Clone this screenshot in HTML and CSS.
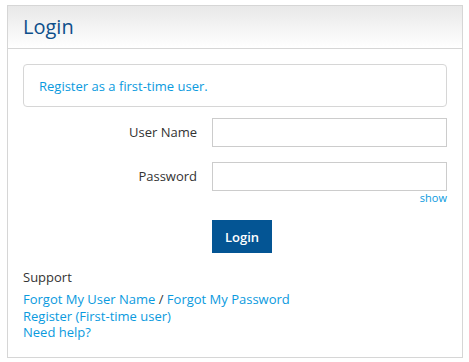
FILE: index.html
```html
<!DOCTYPE html>
<html lang="en">
<head>
    <meta charset="UTF-8">
    <meta name="viewport" content="width=device-width, initial-scale=1.0">
    <title>Login</title>
    <link rel="stylesheet" href="styles.css">
</head>
<body>
    <div class="panel">
        <div class="panel-header">
            <h1>Login</h1>
        </div>
        <div class="panel-body">
            <div class="notice">
                <a href="#">Register as a first-time user.</a>
            </div>

            <form class="login-form" onsubmit="return false;">
                <div class="field">
                    <label for="userName">User Name</label>
                    <input type="text" id="userName">
                </div>
                <div class="field">
                    <label for="password">Password</label>
                    <div class="field-input">
                        <input type="password" id="password">
                        <a href="#" class="show-link">show</a>
                    </div>
                </div>
                <div class="actions">
                    <button type="submit" class="btn">Login</button>
                </div>
            </form>

            <div class="support">
                <h2>Support</h2>
                <p><a href="#">Forgot My User Name</a> / <a href="#">Forgot My Password</a></p>
                <p><a href="#">Register (First-time user)</a></p>
                <p><a href="#">Need help?</a></p>
            </div>
        </div>
    </div>
</body>
</html>
```

FILE: styles.css
```css
body {
    margin: 0;
    padding: 5px 6px 0 7px;
    font-family: "Open Sans", "Liberation Sans", sans-serif;
    font-size: 13px;
    color: #333;
    background: #fff;
}
a {
    color: #0a9ade;
    text-decoration: none;
}
.panel {
    border: 1px solid #d6d6d6;
    height: 353px;
    box-sizing: border-box;
}
.panel-header {
    height: 42px;
    border-bottom: 1px solid #d6d6d6;
    background: linear-gradient(#e8e8e8, #fff);
    padding-left: 15px;
}
.panel-header h1 {
    margin: 0;
    font-size: 20px;
    font-weight: normal;
    line-height: 42px;
    color: #0d4f8b;
}
.panel-body {
    padding: 15px 15px 0 15px;
}
.notice {
    border: 1px solid #d6d6d6;
    border-radius: 4px;
    height: 43px;
    box-sizing: border-box;
    padding-left: 15px;
    display: flex;
    align-items: center;
}
.login-form {
    margin-top: 11px;
}
.field {
    display: flex;
    align-items: flex-start;
    margin-bottom: 15px;
}
.field label {
    width: 174px;
    text-align: right;
    padding-right: 15px;
    line-height: 29px;
}
.field-input {
    display: flex;
    flex-direction: column;
}
.field input {
    width: 235px;
    height: 29px;
    box-sizing: border-box;
    border: 1px solid #ccc;
    margin: 0;
    font: inherit;
}
.show-link {
    align-self: flex-end;
    font-size: 11px;
    line-height: 14px;
}
.actions {
    padding-left: 189px;
    margin-top: 2px;
}
.btn {
    width: 60px;
    height: 33px;
    border: none;
    background: #045594;
    color: #fff;
    font: inherit;
    font-weight: 600;
    font-size: 13px;
    cursor: pointer;
}
.support {
    margin-top: 15px;
}
.support h2 {
    margin: 0 0 5px;
    font-size: 13px;
    font-weight: normal;
    line-height: 18px;
}
.support p {
    margin: 0;
    line-height: 16.5px;
}
```
